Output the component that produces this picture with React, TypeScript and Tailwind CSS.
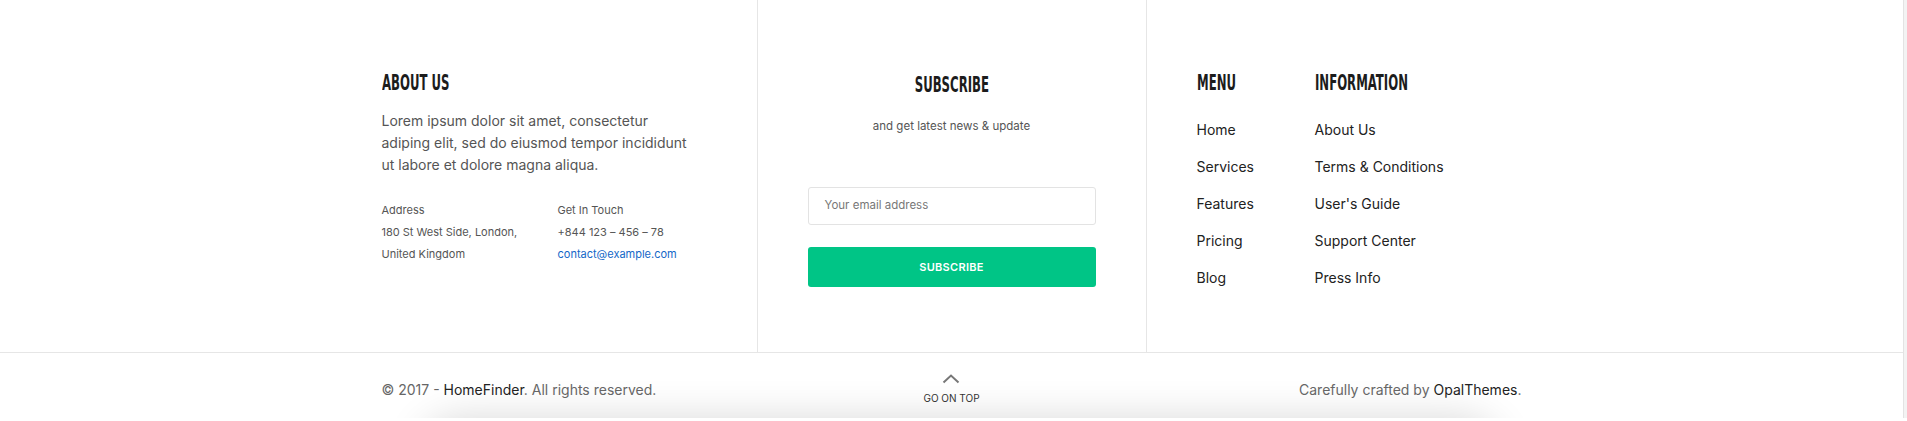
import React from "react";

const body = { fontFamily: "Inter, 'Open Sans', sans-serif" } as React.CSSProperties;
const head = { fontFamily: "'DejaVu Sans Condensed', 'Liberation Sans', sans-serif" } as React.CSSProperties;

function Heading({ children, center = false }: { children: React.ReactNode; center?: boolean }) {
  return (
    <h3
      style={head}
      className={`text-[21px] leading-[24px] font-bold uppercase text-[#1c1c1c] ${center ? "text-center" : ""}`}
    >
      <span className={`inline-block scale-x-[0.62] ${center ? "origin-center" : "origin-left"}`}>{children}</span>
    </h3>
  );
}

export default function App() {
  const menu = ["Home", "Services", "Features", "Pricing", "Blog"];
  const info = ["About Us", "Terms & Conditions", "User's Guide", "Support Center", "Press Info"];
  return (
    <div className="flex w-[1907px] h-[421px] bg-white overflow-hidden" style={body}>
      <div className="w-[1904px] h-[418px] bg-white border-r border-[#e3e3e3] flex flex-col">
        <div className="h-[353px] shrink-0 border-b border-[#e6e6e6]">
          <div className="w-[1170px] mx-auto grid grid-cols-3 h-full">
            <div className="px-[15px] pt-[71px]">
              <Heading>About Us</Heading>
              <p className="mt-[15px] text-[14px] leading-[22px] text-[#555]">
                Lorem ipsum dolor sit amet, consectetur
                <br />
                adiping elit, sed do eiusmod tempor incididunt
                <br />
                ut labore et dolore magna aliqua.
              </p>
              <div className="mt-[23px] flex text-[11px] leading-[22px] text-[#555]">
                <div className="w-[176px]">
                  <div>Address</div>
                  <div>180 St West Side, London,</div>
                  <div>United Kingdom</div>
                </div>
                <div>
                  <div>Get In Touch</div>
                  <div>+844 123 – 456 – 78</div>
                  <div className="text-[#1467c8]">contact@example.com</div>
                </div>
              </div>
            </div>
            <div className="border-l border-r border-[#e6e6e6] px-[50px] pt-[73px] flex flex-col">
              <Heading center>Subscribe</Heading>
              <p className="mt-[19px] text-center text-[11.5px] leading-[20px] text-[#555]">and get latest news &amp; update</p>
              <div className="mt-[51px] h-[38px] border border-[#e3e3e3] rounded-[3px] flex items-center px-[16px] text-[11.5px] text-[#777]">
                Your email address
              </div>
              <button className="mt-[22px] h-[40px] rounded-[3px] bg-[#00c586] text-white text-[11px] font-semibold tracking-[0.3px] uppercase">
                Subscribe
              </button>
            </div>
            <div className="pl-[50px] pt-[71px] flex">
              <div className="w-[118px]">
                <Heading>Menu</Heading>
                <ul className="mt-[16px] text-[14px] leading-[37px] text-[#222]">
                  {menu.map((m) => (
                    <li key={m}>{m}</li>
                  ))}
                </ul>
              </div>
              <div>
                <Heading>Information</Heading>
                <ul className="mt-[16px] text-[14px] leading-[37px] text-[#222]">
                  {info.map((m) => (
                    <li key={m}>{m}</li>
                  ))}
                </ul>
              </div>
            </div>
          </div>
        </div>
        <div className="relative flex-1 overflow-hidden">
          <div className="absolute left-[420px] w-[1080px] top-[66px] h-[80px] rounded-[60px] bg-white shadow-[0_0_40px_rgba(0,0,0,0.16)]" />
          <div className="relative w-[1170px] mx-auto px-[15px] h-full flex items-center justify-between text-[14px] text-[#666]">
            <div className="w-[380px] mt-[8px]">
              © 2017 - <span className="text-[#222]">HomeFinder</span>. All rights reserved.
            </div>
            <div className="flex flex-col items-center mt-[6px]">
              <svg width="18" height="10" viewBox="0 0 18 10" fill="none">
                <path d="M1.5 8.5 L9 1.5 L16.5 8.5" stroke="#777" strokeWidth="2" />
              </svg>
              <div className="mt-[8px] text-[10px] leading-[12px] text-[#333] uppercase">Go on top</div>
            </div>
            <div className="w-[380px] text-right mt-[8px]">
              Carefully crafted by <span className="text-[#222]">OpalThemes</span>.
            </div>
          </div>
        </div>
      </div>
      <div className="w-[3px] h-[418px] bg-[#f3f3f3]" />
    </div>
  );
}
